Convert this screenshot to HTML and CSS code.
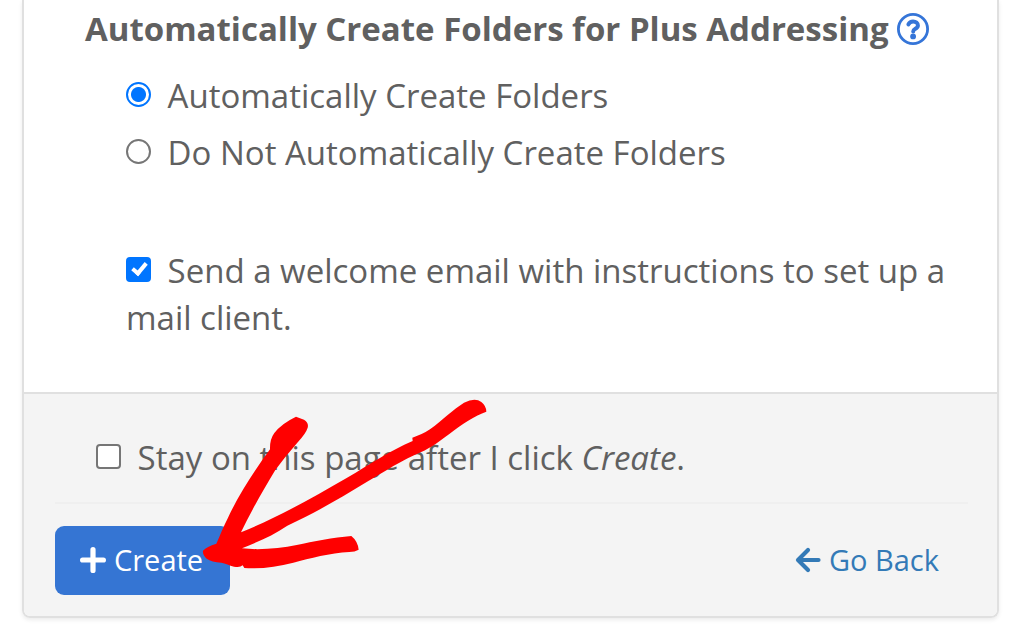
FILE: index.html
```html
<!DOCTYPE html>
<html lang="en">
<head>
  <meta charset="UTF-8">
  <meta name="viewport" content="width=device-width, initial-scale=1.0">
  <title>Create an Email Account</title>
  <link rel="stylesheet" href="styles.css">
</head>
<body>
  <form class="panel">
    <div class="panel-body">
      <fieldset class="options">
        <legend class="options-title">
          Automatically Create Folders for Plus Addressing
          <button type="button" class="help-button" aria-label="Help">
            <svg viewBox="0 0 32 32" width="32" height="32">
              <circle cx="16" cy="16" r="14.6" fill="none" stroke="currentColor" stroke-width="2.8"/>
              <path d="M11.4 11.4c1-2 2.6-2.9 4.7-2.9 2.8 0 4.8 1.6 4.8 3.9 0 3.4-4.7 3.2-4.7 6" fill="none" stroke="currentColor" stroke-width="4" stroke-linecap="round"/>
              <circle cx="16.1" cy="23.4" r="2.9" fill="currentColor"/>
            </svg>
          </button>
        </legend>
        <div class="option">
          <input type="radio" name="folders" id="foldersAuto" checked>
          <label for="foldersAuto">Automatically Create Folders</label>
        </div>
        <div class="option">
          <input type="radio" name="folders" id="foldersManual">
          <label for="foldersManual">Do Not Automatically Create Folders</label>
        </div>
      </fieldset>
      <div class="welcome">
        <input type="checkbox" id="welcomeEmail" checked>
        <label for="welcomeEmail">Send a welcome email with instructions to set up a mail client.</label>
      </div>
    </div>
    <div class="panel-footer">
      <div class="stay">
        <input type="checkbox" id="stay">
        <label for="stay">Stay on this page after I click <em>Create</em>.</label>
      </div>
      <hr>
      <div class="actions">
        <button type="submit" class="create-button">
          <svg viewBox="0 0 26 26" width="26" height="26">
            <path d="M13 2.6v20.8M2.6 13h20.8" fill="none" stroke="currentColor" stroke-width="5.2" stroke-linecap="round"/>
          </svg>
          Create
        </button>
        <a href="#" class="back-link">
          <svg viewBox="0 0 26 26" width="26" height="26">
            <path d="M13 3L3 13l10 10M4 13h19.5" fill="none" stroke="currentColor" stroke-width="4.2" stroke-linecap="round" stroke-linejoin="round"/>
          </svg>
          Go Back
        </a>
      </div>
      <!-- hand drawn arrow over the footer -->
      <svg class="arrow" viewBox="60 21 870 525" width="290" height="175" aria-hidden="true">
        <path fill="#f00" d="M348 80L372 89Q387 98 383 113Q378 130 352 158Q315 200 286 240C250 300 212 366 183 427C290 384 400 322 500 264C570 223 630 182 698 153L697 143Q728 133 750 118C790 88 820 58 852 38Q885 22 904 36Q919 48 919 65C885 77 845 103 808 132C780 153 755 172 722 187C670 208 610 247 560 276C480 325 400 372 322 407C280 436 232 456 186 475C240 481 300 475 350 465C400 454 460 443 514 438Q533 453 536 479Q525 486 508 486C450 489 390 505 340 518C290 531 240 537 193 534L188 526Q180 534 162 530C148 526 136 520 124 518Q95 516 80 506Q67 495 69 482Q80 470 109 461C120 436 130 410 144 383C180 306 225 240 270 178Q269 148 283 129Q304 101 348 80Z"/>
      </svg>
    </div>
  </form>
</body>
</html>
```

FILE: styles.css
```css
body {
  margin: 0;
  background-color: #fff;
  color: #606060;
  font-family: "Open Sans", sans-serif;
  font-size: 33px;
  line-height: 47px;
}

.panel {
  margin: 0 25px 16px 22px;
  border: 2px solid #e0e0e0;
  border-top: none;
  border-radius: 0 0 8px 8px;
  box-shadow: 0 2px 4px rgba(0, 0, 0, 0.08);
}

.panel-body {
  padding: 5px 40px 51px 61px;
}

.options {
  margin: 0;
  padding: 0;
  border: none;
}

.options-title {
  padding: 0;
  margin-bottom: 20px;
  font-weight: bold;
}

.help-button {
  padding: 0;
  border: none;
  background: none;
  color: #3575d8;
  cursor: pointer;
  vertical-align: -4px;
}

.help-button svg {
  display: block;
}

.option {
  margin: 0 0 10px 41px;
}

.welcome {
  margin: 61px 0 0 41px;
}

input {
  box-sizing: border-box;
  width: 25px;
  height: 25px;
  margin: 0 8px 0 0;
  appearance: none;
  border: 2px solid #767676;
  background-color: #fff;
  vertical-align: 1px;
}

input[type="radio"] {
  border-radius: 50%;
}

input[type="radio"]:checked {
  border-color: #0075ff;
  background-image: radial-gradient(circle, #0075ff 7px, #fff 8px);
}

input[type="checkbox"] {
  border-radius: 4px;
}

input[type="checkbox"]:checked {
  border-color: #0075ff;
  background-color: #0075ff;
  position: relative;
}

input[type="checkbox"]:checked::after {
  content: "";
  position: absolute;
  left: 7px;
  top: 1px;
  width: 5px;
  height: 11px;
  border: solid #fff;
  border-width: 0 4px 4px 0;
  transform: rotate(40deg);
}

.panel-footer {
  position: relative;
  padding: 40px 29px 21px 31px;
  border-top: 2px solid #e0e0e0;
  border-radius: 0 0 6px 6px;
  background-color: #f4f4f4;
}

.stay {
  margin-left: 41px;
}

hr {
  height: 2px;
  margin: 21px 0 22px;
  border: none;
  background-color: #efefef;
}

.actions {
  display: flex;
  justify-content: space-between;
  align-items: center;
  font-size: 29px;
}

.create-button,
.back-link {
  display: flex;
  align-items: center;
  gap: 8px;
  padding-bottom: 2px;
}

.create-button {
  height: 69px;
  padding: 0 27px 2px 25px;
  border: none;
  border-radius: 9px;
  background-color: #3575d3;
  color: #fff;
  font: inherit;
  cursor: pointer;
}

.back-link {
  margin-right: 29px;
  color: #337ab7;
  text-decoration: none;
}

.arrow {
  position: absolute;
  left: 176px;
  top: 3px;
}
```
